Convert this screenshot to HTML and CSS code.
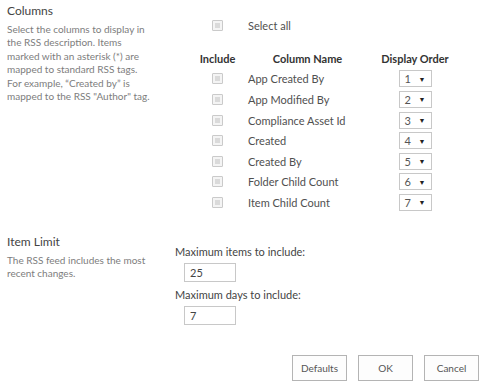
FILE: index.html
```html
<!DOCTYPE html>
<html>
<head>
<meta charset="utf-8">
<link rel="stylesheet" href="styles.css">
</head>
<body>
<div class="page">
  <section class="section columns-section">
    <div class="info">
      <h2 class="title">Columns</h2>
      <p class="desc">Select the columns to display in<br>the RSS description. Items<br>marked with an asterisk (*) are<br>mapped to standard RSS tags.<br>For example, “Created by” is<br>mapped to the RSS "Author" tag.</p>
    </div>
    <div class="fields">
      <div class="select-all">
        <span class="cell-check"><span class="cb"></span></span>
        <span class="name">Select all</span>
      </div>
      <div class="grid">
        <div class="hd">Include</div>
        <div class="hd">Column Name</div>
        <div class="hd">Display Order</div>

        <div class="cell-check"><span class="cb"></span></div>
        <div class="name">App Created By</div>
        <div class="cell-order"><span class="sel"><span class="val">1</span><span class="arr">▼</span></span></div>

        <div class="cell-check"><span class="cb"></span></div>
        <div class="name">App Modified By</div>
        <div class="cell-order"><span class="sel"><span class="val">2</span><span class="arr">▼</span></span></div>

        <div class="cell-check"><span class="cb"></span></div>
        <div class="name">Compliance Asset Id</div>
        <div class="cell-order"><span class="sel"><span class="val">3</span><span class="arr">▼</span></span></div>

        <div class="cell-check"><span class="cb"></span></div>
        <div class="name">Created</div>
        <div class="cell-order"><span class="sel"><span class="val">4</span><span class="arr">▼</span></span></div>

        <div class="cell-check"><span class="cb"></span></div>
        <div class="name">Created By</div>
        <div class="cell-order"><span class="sel"><span class="val">5</span><span class="arr">▼</span></span></div>

        <div class="cell-check"><span class="cb"></span></div>
        <div class="name">Folder Child Count</div>
        <div class="cell-order"><span class="sel"><span class="val">6</span><span class="arr">▼</span></span></div>

        <div class="cell-check"><span class="cb"></span></div>
        <div class="name">Item Child Count</div>
        <div class="cell-order"><span class="sel"><span class="val">7</span><span class="arr">▼</span></span></div>
      </div>
    </div>
  </section>

  <section class="section limit-section">
    <div class="info">
      <h2 class="title">Item Limit</h2>
      <p class="desc">The RSS feed includes the most<br>recent changes.</p>
    </div>
    <div class="limit-fields">
      <label class="lbl">Maximum items to include:</label>
      <input class="txt" type="text" value="25">
      <label class="lbl">Maximum days to include:</label>
      <input class="txt" type="text" value="7">
    </div>
  </section>

  <div class="buttons">
    <button class="btn">Defaults</button>
    <button class="btn">OK</button>
    <button class="btn">Cancel</button>
  </div>
</div>
</body>
</html>
```

FILE: styles.css
```css
html, body {
  margin: 0;
  padding: 0;
  background: #ffffff;
}
body {
  font-family: Lato, "Open Sans", sans-serif;
  color: #444444;
}
.page {
  width: 499px;
  height: 391px;
  padding: 3px 20px 0 7px;
  box-sizing: border-box;
}
.section {
  display: grid;
  grid-template-columns: 168px 1fr;
}
.title {
  margin: 0;
  font-size: 12px;
  line-height: 15px;
  font-weight: normal;
  color: #444444;
}
.desc {
  margin: 5px 0 0 0;
  font-size: 10px;
  line-height: 13.4px;
  color: #7d7d7d;
}
.fields {
  padding-top: 12px;
  margin-left: 20px;
}
.select-all {
  display: grid;
  grid-template-columns: 45px 135px 80px;
  height: 20px;
  align-items: center;
  margin-bottom: 13px;
}
.grid {
  display: grid;
  grid-template-columns: 45px 135px 80px;
  grid-auto-rows: 20.6px;
  align-items: center;
  font-size: 11px;
}
.select-all .name,
.grid .name {
  padding-left: 8px;
  font-size: 11px;
  color: #505050;
}
.hd {
  font-weight: bold;
  text-align: center;
  font-size: 11px;
  color: #333333;
}
.cell-check {
  display: flex;
  justify-content: center;
  align-items: center;
}
.cb {
  width: 9px;
  height: 9px;
  border: 1px solid #cacaca;
  background: #dadada;
  box-shadow: inset 0 0 0 2px #f4f4f4;
  border-radius: 1px;
}
.cell-order {
  display: flex;
  justify-content: center;
}
.sel {
  display: flex;
  align-items: center;
  justify-content: space-between;
  box-sizing: border-box;
  width: 33px;
  height: 17px;
  border: 1px solid #c8c8c8;
  padding: 0 5px 0 5px;
  font-size: 11px;
  color: #555555;
}
.arr {
  font-size: 7px;
  color: #222222;
}
.limit-section {
  margin-top: 21px;
}
.limit-fields {
  display: flex;
  flex-direction: column;
  align-items: flex-start;
  padding-top: 11px;
}
.lbl {
  font-size: 11px;
  line-height: 14px;
  color: #444444;
}
.txt {
  margin: 4px 0 6px 9px;
  box-sizing: border-box;
  width: 52px;
  height: 19px;
  border: 1px solid #c8c8c8;
  padding: 0 0 0 5px;
  font-family: Lato, "Open Sans", sans-serif;
  font-size: 11px;
  color: #444444;
  outline: none;
}
.buttons {
  display: flex;
  justify-content: flex-end;
  gap: 11px;
  margin-top: 24px;
}
.btn {
  width: 55px;
  height: 26px;
  border: 1px solid #b4b4b4;
  background: #fdfdfd;
  font-family: Lato, "Open Sans", sans-serif;
  font-size: 10px;
  color: #555555;
  padding: 0;
}
```
